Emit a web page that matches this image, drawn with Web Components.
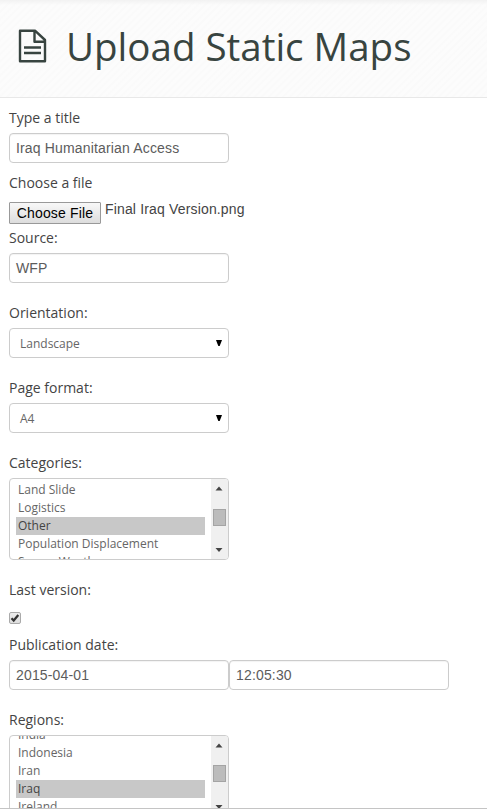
<!DOCTYPE html>
<html lang="en">
<head>
<meta charset="utf-8">
<title>Upload Static Maps</title>
<style>
html,body{margin:0;height:809px;overflow:hidden;background:#fff}
body{font:14px/20px "Open Sans",sans-serif;color:#444}
</style>
</head>
<body>
<upload-page></upload-page>
<script>
const define=(name,html,setup)=>customElements.define(name,class extends HTMLElement{
  connectedCallback(){
    if(this.shadowRoot)return;
    this.attachShadow({mode:'open'}).innerHTML=html;
    if(setup)setup(this,this.shadowRoot);
  }
});

define('page-header',`<style>
:host{display:flex;align-items:center;box-sizing:border-box;height:98px;padding:0 0 5px 18px;gap:19px;border-bottom:1px solid #e8e8e8;
background:linear-gradient(#f2f2f2,rgba(250,250,250,0) 5px),repeating-linear-gradient(135deg,#fcfcfc 0 2px,#fafafa 3px 4px,#fcfcfc 5px);color:#384440}
h1{margin:0;font:400 38.5px/40px "Open Sans",sans-serif;white-space:nowrap}
svg{display:block;width:29px;height:34px}
</style>
<svg viewBox="0 0 29 34" fill="none" stroke="#384440" stroke-width="2.4" stroke-linejoin="round"><path d="M2 1.7h15L27 11v21.3H2zM16.5 2v10.7H27M6 18.5h17M6 24h17"/></svg>
<h1><slot></slot></h1>`);

define('form-field',`<style>
:host{display:block;box-sizing:border-box;padding-bottom:var(--after,10px)}
.label{height:20px;margin-bottom:var(--gap,5px);white-space:nowrap}
.controls{display:flex}
</style><div class="label"></div><div class="controls"><slot></slot></div>`,
(el,root)=>root.querySelector('.label').textContent=el.getAttribute('label'));

define('text-box',`<style>
:host{display:block;box-sizing:border-box;width:220px;height:30px;padding:4px 6px;border:1px solid #ccc;border-radius:4px;background:#fff;box-shadow:inset 0 1px 1px rgba(0,0,0,.05);font:14px/20px "Liberation Sans",sans-serif;letter-spacing:.16px;color:#5c5c5c;white-space:nowrap}
</style><slot></slot>`);

define('select-box',`<style>
:host{display:flex;justify-content:space-between;box-sizing:border-box;width:220px;height:30px;padding:4px 6px 4px 10px;border:1px solid #ccc;border-radius:4px;background:#fff;font-size:12px;line-height:21px;color:#666}
svg{display:block;width:6px;height:6px;margin-top:7px}
</style><span><slot></slot></span><svg viewBox="0 0 6 6"><path fill="#000" d="M0 0h6L3.7 6H2.3z"/></svg>`);

define('file-box',`<style>
:host{display:flex;gap:4px;height:26px;font:14px/16px "Liberation Sans",sans-serif;letter-spacing:.16px}
button{box-sizing:border-box;width:92px;height:22px;margin:4px 0 0;padding:1px 0 0;border:1px solid #999;border-radius:1px;background:linear-gradient(#f8f8f8,#ddd);font:14px/19px "Liberation Sans",sans-serif;letter-spacing:.16px;color:#000;white-space:nowrap}
span{padding-top:3px;white-space:nowrap}
</style><button>Choose File</button><span><slot></slot></span>`);

define('list-box',`<style>
:host{display:flex;justify-content:space-between;box-sizing:border-box;width:220px;height:82px;border:1px solid #ccc;border-radius:4px;background:#fff;overflow:hidden;color:#666}
.rows{width:189px;margin:var(--scroll,2px) 0 0 6px}
svg{display:block;flex:none;width:17px;height:80px;background:#f0f0f0}
</style><div class="rows"><slot></slot></div>
<svg viewBox="0 0 17 80"><path fill="#444" d="M4.5 11.5L8 7.5l3.5 4zM4.5 69h7L8 73z"/><rect x="2.5" y="30.5" width="12" height="16" fill="#bcbcbc" stroke="#a4a4a4"/></svg>`,
(el,root)=>{if(el.hasAttribute('shift'))root.querySelector('rect').setAttribute('y','29.5');});

define('list-item',`<style>
:host{display:block;height:18px;padding-left:2px;font-size:12px;line-height:18px;white-space:nowrap}
:host([selected]){background:#c8c8c8;color:#444}
</style><slot></slot>`);

define('check-mark',`<style>:host{display:block;width:12px;height:12px}svg{display:block}</style>
<svg width="12" height="12" viewBox="0 0 12 12"><defs><linearGradient id="g" x2="0" y2="1"><stop stop-color="#eee"/><stop offset="1" stop-color="#ddd"/></linearGradient></defs><rect x=".5" y=".5" width="11" height="11" rx="1.5" fill="url(#g)" stroke="#aaa"/><path d="M2.5 6.2l2.2 2.3L9.3 3" fill="none" stroke="#333" stroke-width="2.2"/></svg>`);

define('upload-page',`<style>
:host{box-sizing:border-box;height:809px;overflow:hidden;display:flex;flex-direction:column}
main{flex:1;min-height:0;overflow:hidden;padding:10px 0 0 9px;border-bottom:1px solid #c4c4c4}
</style>
<page-header>Upload Static Maps</page-header>
<main>
<form-field label="Type a title"><text-box>Iraq Humanitarian Access</text-box></form-field>
<form-field label="Choose a file" style="--after:4px"><file-box>Final Iraq Version.png</file-box></form-field>
<form-field label="Source:" style="--after:20px"><text-box>WFP</text-box></form-field>
<form-field label="Orientation:" style="--after:20px"><select-box>Landscape</select-box></form-field>
<form-field label="Page format:" style="--after:20px"><select-box>A4</select-box></form-field>
<form-field label="Categories:" style="--after:20px"><list-box><list-item>Land Slide</list-item><list-item>Logistics</list-item><list-item selected>Other</list-item><list-item>Population Displacement</list-item><list-item>Severe Weather</list-item></list-box></form-field>
<form-field label="Last version:" style="--gap:12px;--after:11px"><check-mark></check-mark></form-field>
<form-field label="Publication date:" style="--after:20px"><text-box>2015-04-01</text-box><text-box>12:05:30</text-box></form-field>
<form-field label="Regions:"><list-box shift style="--scroll:-10px"><list-item>India</list-item><list-item>Indonesia</list-item><list-item>Iran</list-item><list-item selected>Iraq</list-item><list-item>Ireland</list-item></list-box></form-field>
</main>`);
</script>
</body>
</html>
